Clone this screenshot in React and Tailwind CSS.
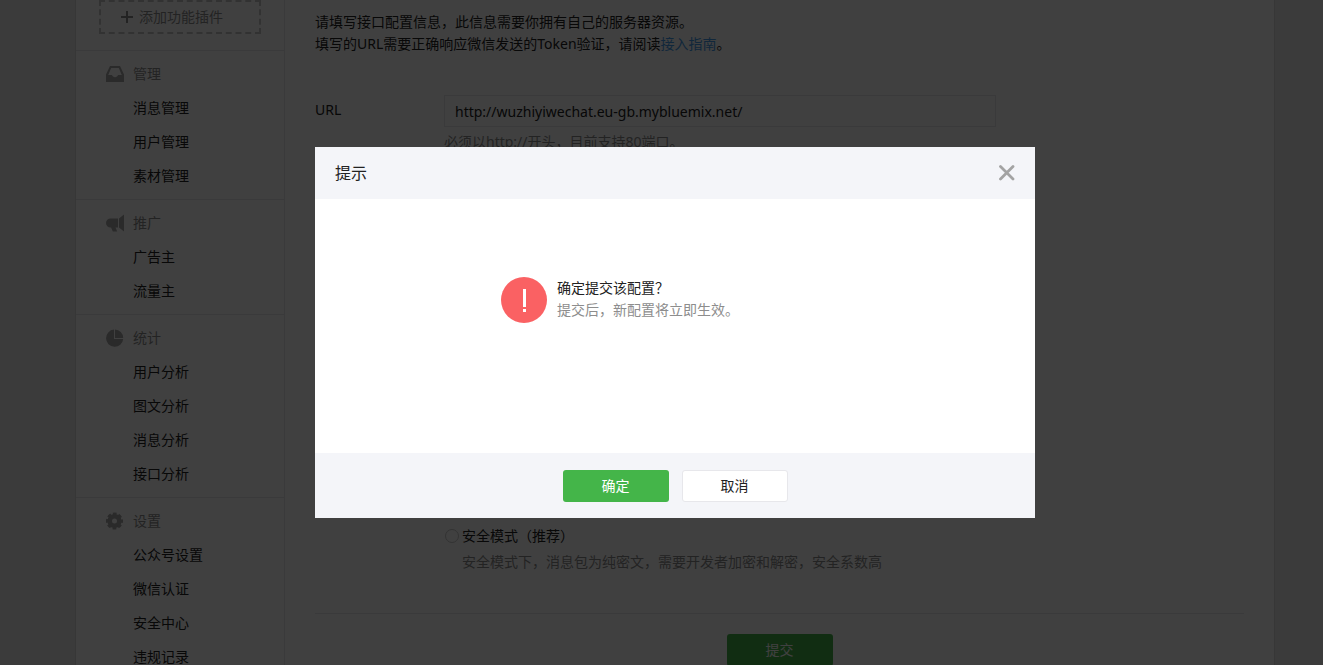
import { useState } from 'react';

const menus = [
  { title: '管理', icon: InboxIcon, items: ['消息管理', '用户管理', '素材管理'] },
  { title: '推广', icon: HornIcon, items: ['广告主', '流量主'] },
  { title: '统计', icon: PieIcon, items: ['用户分析', '图文分析', '消息分析', '接口分析'] },
  { title: '设置', icon: GearIcon, items: ['公众号设置', '微信认证', '安全中心', '违规记录'] },
];

function InboxIcon() {
  return (
    <svg width="18" height="18" viewBox="0 0 18 18" fill="currentColor" aria-hidden="true">
      <path fillRule="evenodd" d="M4 1h10l4 8.500V17H0V9.500zM5.200 3 2.200 10H6c.4 1.400 1.500 2.200 3 2.200s2.600-.8 3-2.200h3.800l-3-7z" />
    </svg>
  );
}

function HornIcon() {
  return (
    <svg width="18" height="18" viewBox="0 0 18 18" fill="currentColor" aria-hidden="true">
      <path d="M4.500 4.500H12v9H9.500l1.700 4H6.800l-1.700-4h-.6a4.500 4.500 0 0 1 0-9zM13 4.500 18 .5v17l-5-4z" />
    </svg>
  );
}

function PieIcon() {
  return (
    <svg width="18" height="18" viewBox="0 0 18 18" fill="currentColor" aria-hidden="true">
      <path d="M8 .6V10h9.200A8.600 8.600 0 1 1 8 .6z" />
      <path d="M9 .5A8.600 8.600 0 0 1 17.200 9H9z" />
    </svg>
  );
}

function GearIcon() {
  return (
    <svg width="18" height="18" viewBox="0 0 18 18" aria-hidden="true">
      <circle cx="8.500" cy="9" r="4.800" fill="none" stroke="currentColor" strokeWidth="4.600" />
      <circle cx="8.500" cy="9" r="7.200" fill="none" stroke="currentColor" strokeWidth="2.600" strokeDasharray="3.600 2.055" strokeDashoffset="1.800" />
    </svg>
  );
}

function Sidebar() {
  return (
    <aside className="w-[209px] shrink-0 border-r border-[#e7e7eb]">
      <div className="px-[23px] pb-4">
        <button className="flex h-[34px] w-full items-center gap-1.5 border-2 border-dashed border-[#c8c8c8] pl-5 text-[#8d8d8d]">
          <svg width="12" height="12" viewBox="0 0 12 12" fill="currentColor" aria-hidden="true">
            <path d="M5 0h2v5h5v2H7v5H5V7H0V5h5z" />
          </svg>
          添加功能插件
        </button>
      </div>
      {menus.map(({ title, icon: Icon, items }) => (
        <dl key={title} className="border-t border-[#e7e7eb] py-1.5 leading-[34px]">
          <dt className="flex items-center pl-[30px] text-[#8d8d8d]">
            <span className="w-[27px] text-[#a6a6a6]">
              <Icon />
            </span>
            {title}
          </dt>
          {items.map((item) => (
            <dd key={item} className="pl-[57px]">
              <a href="#">{item}</a>
            </dd>
          ))}
        </dl>
      ))}
    </aside>
  );
}

function ConfigForm({ onSubmit }) {
  const [url, setUrl] = useState('http://wuzhiyiwechat.eu-gb.mybluemix.net/');

  const handleSubmit = (e) => {
    e.preventDefault();
    onSubmit();
  };

  return (
    <main className="min-w-0 grow px-[30px] pt-[11px]">
      <p>
        请填写接口配置信息，此信息需要你拥有自己的服务器资源。
        <br />
        填写的URL需要正确响应微信发送的Token验证，请阅读
        <a href="#" className="text-[#459ae9]">接入指南</a>。
      </p>

      <form onSubmit={handleSubmit} className="pt-10">
        <div className="flex">
          <label htmlFor="url" className="w-[129px] shrink-0 pt-1">URL</label>
          <div>
            <input
              id="url"
              name="url"
              type="text"
              value={url}
              onChange={(e) => setUrl(e.target.value)}
              className="block h-8 w-[552px] border border-[#e7e7eb] px-2.5 focus:outline-none"
            />
            <p className="pt-1 text-[#8d8d8d]">必须以http://开头，目前支持80端口。</p>
          </div>
        </div>

        <div className="mt-[372px] pl-[130px]">
          <label className="flex items-center gap-[3px]">
            <input
              type="radio"
              name="mode"
              className="h-3.5 w-3.5 appearance-none rounded-full border border-[#c8c8c8] checked:bg-[#44b549]"
            />
            安全模式（推荐）
          </label>
          <p className="pt-1 pl-[17px] text-[#8d8d8d]">
            安全模式下，消息包为纯密文，需要开发者加密和解密，安全系数高
          </p>
        </div>

        <div className="mt-10 border-t border-[#e7e7eb] pt-5 text-center">
          <button type="submit" className="h-8 w-[106px] rounded-[3px] bg-[#44b549] text-white">
            提交
          </button>
        </div>
      </form>
    </main>
  );
}

function ConfirmDialog({ onClose }) {
  return (
    <div className="fixed inset-0 flex items-center justify-center bg-black/75 pl-[27px]">
      <div role="dialog" aria-labelledby="dialog-title" className="w-[720px] bg-white">
        <div className="flex h-[52px] items-center justify-between bg-[#f4f5f9] px-5">
          <h3 id="dialog-title" className="text-base">提示</h3>
          <button onClick={onClose} aria-label="关闭" className="text-[#a3a3a3]">
            <svg width="16" height="16" viewBox="0 0 16 16" fill="none" stroke="currentColor" strokeWidth="2.800" strokeLinecap="round">
              <path d="M1.500 1.500 14 14M14 1.500 1.500 14" />
            </svg>
          </button>
        </div>

        <div className="flex h-[254px] gap-2.5 pt-[78px] pl-[186px]">
          <svg width="46" height="46" viewBox="0 0 46 46" aria-hidden="true">
            <circle cx="23" cy="23" r="23" fill="#fa6163" />
            <path d="M22 12h3v18h-3zM22 32h3v3h-3z" fill="#fff" />
          </svg>
          <div>
            <h4>确定提交该配置？</h4>
            <p className="text-[#8d8d8d]">提交后，新配置将立即生效。</p>
          </div>
        </div>

        <div className="flex h-[65px] items-center justify-center gap-[13px] bg-[#f4f5f9]">
          <button onClick={onClose} className="h-8 w-[106px] rounded-[3px] bg-[#44b549] text-white">
            确定
          </button>
          <button onClick={onClose} className="h-8 w-[106px] rounded-[3px] border border-[#e7e7eb] bg-white">
            取消
          </button>
        </div>
      </div>
    </div>
  );
}

export default function App() {
  const [open, setOpen] = useState(true);

  return (
    <div className="h-screen overflow-hidden bg-[#eaeaec] pl-[27px] font-['Noto_Sans','Noto_Sans_CJK_SC',sans-serif] text-sm leading-[22px] text-[#222]">
      <div className="mx-auto flex min-h-full max-w-[1200px] border-x border-[#d9dadc] bg-white">
        <Sidebar />
        <ConfigForm onSubmit={() => setOpen(true)} />
      </div>
      {open && <ConfirmDialog onClose={() => setOpen(false)} />}
    </div>
  );
}
